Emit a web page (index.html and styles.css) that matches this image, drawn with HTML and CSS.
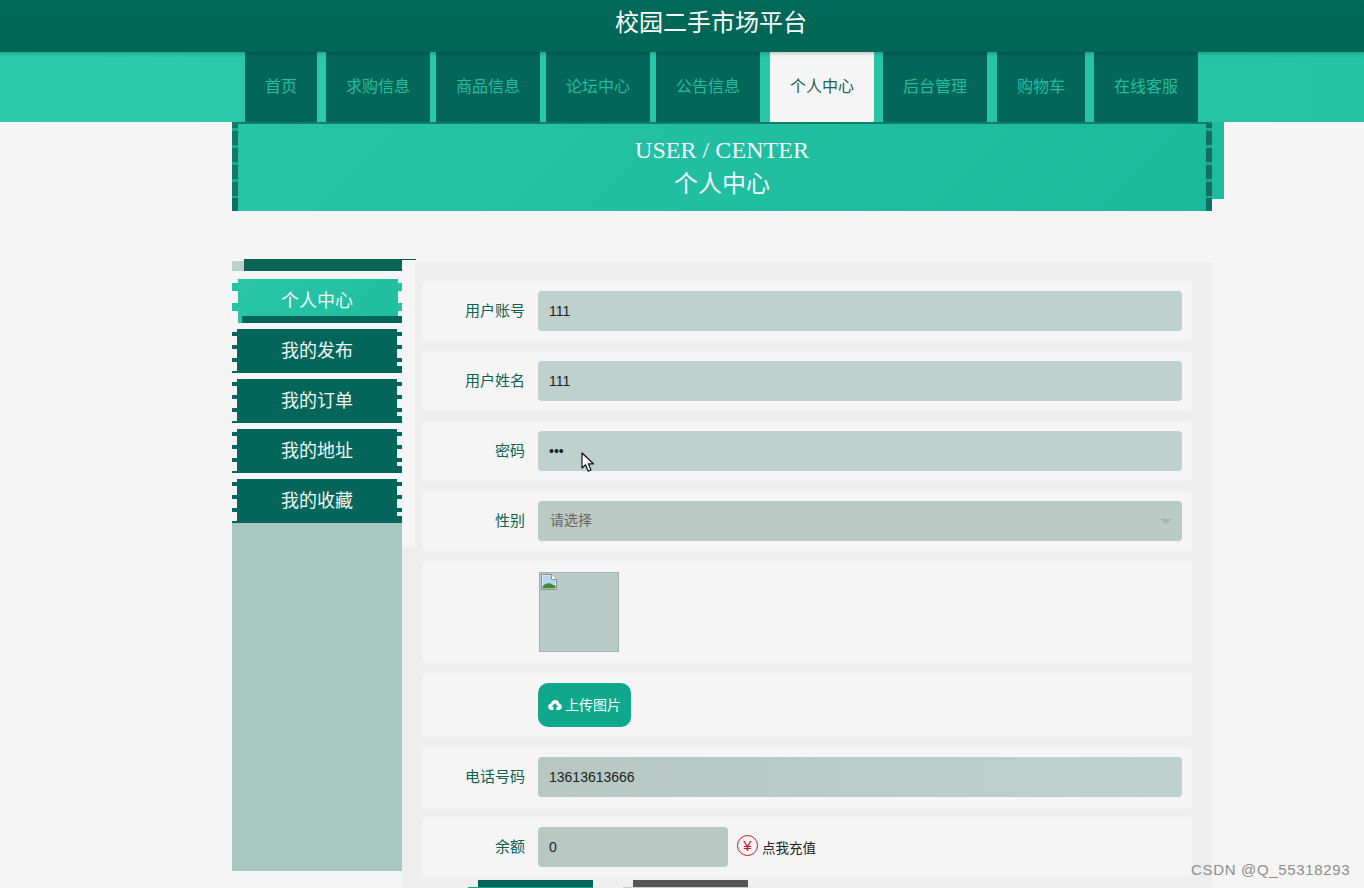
FILE: index.html
```html
<!DOCTYPE html>
<html lang="zh">
<head>
    <meta charset="UTF-8">
    <meta name="viewport" content="width=device-width, initial-scale=1.0">
    <title>校园二手市场平台</title>
    <link rel="stylesheet" href="styles.css">
</head>
<body>
<div class="page">
    <header class="site-header">
        <h1 class="site-title">校园二手市场平台</h1>
    </header>

    <nav class="main-nav">
        <a class="nav-item nav-short" href="#">首页</a>
        <a class="nav-item nav-far" href="#">求购信息</a>
        <a class="nav-item" href="#">商品信息</a>
        <a class="nav-item" href="#">论坛中心</a>
        <a class="nav-item" href="#">公告信息</a>
        <a class="nav-item nav-far nav-active" href="#">个人中心</a>
        <a class="nav-item nav-far" href="#">后台管理</a>
        <a class="nav-item nav-far nav-cart" href="#">购物车</a>
        <a class="nav-item nav-far" href="#">在线客服</a>
    </nav>

    <section class="banner">
        <div class="banner-en">USER / CENTER</div>
        <div class="banner-cn">个人中心</div>
    </section>

    <div class="content">
        <aside class="side">
            <div class="side-top"></div>
            <ul class="side-list">
                <li><a class="side-link side-active" href="#">个人中心</a></li>
                <li><a class="side-link" href="#">我的发布</a></li>
                <li><a class="side-link" href="#">我的订单</a></li>
                <li><a class="side-link" href="#">我的地址</a></li>
                <li><a class="side-link" href="#">我的收藏</a></li>
            </ul>
            <div class="side-fill"></div>
        </aside>

        <main class="panel">
            <form class="user-form">
                <div class="row">
                    <label class="row-label">用户账号</label>
                    <input class="field" type="text" value="111">
                </div>
                <div class="row">
                    <label class="row-label">用户姓名</label>
                    <input class="field" type="text" value="111">
                </div>
                <div class="row">
                    <label class="row-label">密码</label>
                    <div class="field-wrap">
                        <input class="field" type="password" value="111">
                        <svg class="cursor" width="14" height="21" viewBox="0 0 14 21">
                            <path d="M1 1v15l3.600-3.200 2.600 6.400 2.800-1.200-2.700-6.200H12.500z" fill="#fff" stroke="#111" stroke-width="1.200" stroke-linejoin="round"/>
                        </svg>
                    </div>
                </div>
                <div class="row">
                    <label class="row-label">性别</label>
                    <div class="field-wrap select-wrap">
                        <select class="field field-select">
                            <option>请选择</option>
                        </select>
                    </div>
                </div>
                <div class="row row-image">
                    <span class="row-label"></span>
                    <div class="avatar">
                        <svg width="16" height="16" viewBox="0 0 16 16">
                            <path d="M.5.5h10l5 5v10H.5z" fill="#fff" stroke="#8a8f94"/>
                            <path d="M1.500 1.500h8.500v4.500h4.500v4L1.500 13z" fill="#b9d3f2"/>
                            <path d="M1.500 14.500v-2c3-3.500 7-4 9-2.500 1.500 1 3 1.500 4 1v3.500z" fill="#3f8a2e"/>
                            <path d="M10.500.5v5h5" fill="#fff" stroke="#8a8f94"/>
                        </svg>
                    </div>
                </div>
                <div class="row row-upload">
                    <span class="row-label"></span>
                    <button class="upload-btn" type="button">
                        <svg width="14" height="12" viewBox="0 0 14 12">
                            <path d="M3.500 11C1.600 11 .2 9.600.2 7.800c0-1.600 1.100-2.900 2.700-3.200C3.400 2.500 5.100 1 7.200 1c2.200 0 4 1.600 4.300 3.700 1.400.3 2.400 1.600 2.400 3.100 0 1.800-1.400 3.200-3.200 3.200H8.500V7.800h1.900L7 4.300 3.600 7.800h1.900V11z" fill="#fff"/>
                        </svg>
                        <span class="upload-text">上传图片</span>
                    </button>
                </div>
                <div class="row row-phone">
                    <label class="row-label">电话号码</label>
                    <input class="field field-low" type="text" value="13613613666">
                </div>
                <div class="row">
                    <label class="row-label">余额</label>
                    <input class="field field-low field-money" type="text" value="0">
                    <a class="recharge" href="#"><span class="yuan">¥</span>点我充值</a>
                </div>
                <div class="actions">
                    <button class="action-btn" type="button" aria-label="提交"></button>
                    <button class="action-btn action-out" type="button" aria-label="退出登录"></button>
                </div>
            </form>
        </main>
    </div>

    <div class="watermark">CSDN @Q_55318293</div>
</div>
</body>
</html>
```

FILE: styles.css
```css
*,
*:after,
*:before{
    box-sizing: border-box;
}

html, body{
    margin: 0;
    padding: 0;
}

body{
    background-color: #f5f5f5;
    font-family: "Liberation Sans", "Noto Sans CJK SC", sans-serif;
}

a{
    text-decoration: none;
}

.page{
    position: relative;
    width: 1364px;
    height: 888px;
    overflow: hidden;
}

/* top */
.site-header{
    position: relative;
    z-index: 1;
    height: 52px;
    padding-left: 615px;
    background: linear-gradient(180deg, #00695a, #006656);
    box-shadow: 0 2px 3px rgba(0, 0, 0, .18);
}

.site-title{
    margin: 0;
    font-size: 24px;
    font-weight: normal;
    line-height: 46px;
    color: #fff;
}

.main-nav{
    display: flex;
    gap: 6px;
    height: 70px;
    padding-left: 245px;
    background: linear-gradient(90deg, #2cc9ac, #25c2a5);
}

.nav-item{
    width: 104px;
    font-size: 16px;
    line-height: 70px;
    text-align: center;
    color: #25bd9d;
    background-color: #02665a;
}

.nav-short{
    width: 72px;
}

.nav-far{
    margin-left: 3px;
}

.nav-cart{
    width: 88px;
    margin-left: 4px;
}

.nav-active{
    color: #1d5f55;
    background-color: #f5f5f5;
    margin-left: 4px;
}

.banner{
    position: relative;
    width: 980px;
    height: 89px;
    margin-left: 232px;
    padding-top: 10px;
    border-top: 2px solid #137d6b;
    text-align: center;
    color: #f2fbf8;
    font-family: "Liberation Serif", "Noto Sans CJK SC", serif;
    font-size: 24px;
    line-height: 33px;
    background:
        linear-gradient(#0f6f60, #0f6f60) left bottom / 6px 13px no-repeat,
        linear-gradient(#0f6f60, #0f6f60) right bottom / 6px 13px no-repeat,
        repeating-linear-gradient(180deg, #127a67 0 4px, #22a78f 4px 7px, #127a67 7px 17px) left top / 6px 100% no-repeat,
        repeating-linear-gradient(180deg, #0f6f60 0 4px, #22a78f 4px 7px, #0f6f60 7px 17px) right top / 6px 100% no-repeat,
        linear-gradient(135deg, #28c4a8, #1ab99c);
}

.banner-en{
    height: 34px;
    letter-spacing: .05px;
}

.banner:after{
    content: "";
    position: absolute;
    top: -2px;
    left: 980px;
    width: 12px;
    height: 77px;
    background-color: #20bb9f;
}

/* content */
.content{
    display: flex;
    align-items: flex-start;
    width: 980px;
    margin: 48px 0 0 232px;
}

.side{
    display: flex;
    flex-direction: column;
    width: 170px;
    height: 612px;
}

.side-top{
    position: relative;
    height: 12px;
    margin-bottom: 8px;
    background:
        linear-gradient(#0a6454, #0a6454) 12px 0 / 158px 12px no-repeat,
        linear-gradient(#bcd0cb, #bcd0cb) 0 2px / 12px 10px no-repeat;
}

.side-top:after{
    content: "";
    position: absolute;
    top: 0;
    left: 170px;
    width: 14px;
    height: 1px;
    background-color: #0a5c4e;
}

.side-list{
    display: flex;
    flex-direction: column;
    gap: 6px;
    margin: 0;
    padding: 0;
    list-style: none;
}

.side-link{
    display: block;
    height: 44px;
    font-size: 18px;
    line-height: 44px;
    text-align: center;
    color: #f1f8f6;
    background:
        linear-gradient(#04665a, #04665a) 5px 0 / 160px 100% no-repeat,
        linear-gradient(#04665a, #04665a) right bottom / 165px 7px no-repeat,
        repeating-linear-gradient(180deg, transparent 0 3px, #04665a 3px 7px, transparent 7px 13px);
}

.side-active{
    background:
        linear-gradient(#04665a, #04665a) right bottom / 160px 7px no-repeat,
        linear-gradient(135deg, #2ac5a9, #20bd9f) 6px 0 / 160px 100% no-repeat,
        linear-gradient(#26c2a5, #26c2a5) 0 4px / 170px 8px no-repeat,
        linear-gradient(#26c2a5, #26c2a5) 0 24px / 170px 8px no-repeat;
}

.side-fill{
    flex: 1;
    background-color: #a9c7c1;
}

.panel{
    flex: 1;
    height: 640px;
    margin-top: 3px;
    padding: 19px 20px 0;
    background:
        linear-gradient(#f5f5f5, #f5f5f5) 0 0 / 13px 285px no-repeat,
        #eeeeee;
}

.user-form{
    display: flex;
    flex-direction: column;
    gap: 10px;
}

.row{
    display: flex;
    align-items: center;
    height: 60px;
    padding-right: 10px;
    border-radius: 4px;
    background-color: #f5f5f5;
}

.row-image{
    height: 102px;
}

.row-upload{
    height: 64px;
}

.row-phone{
    height: 62px;
    margin-bottom: -2px;
    padding-bottom: 2px;
}

.row-label{
    flex: none;
    width: 103px;
    margin-right: 13px;
    padding-bottom: 3px;
    font-size: 15px;
    text-align: right;
    color: #0f6152;
}

.field-wrap{
    position: relative;
    flex: 1;
    display: flex;
}

.field{
    flex: 1;
    width: 100%;
    height: 40px;
    padding: 0 11px;
    border: 0;
    border-radius: 4px;
    outline: none;
    font-family: inherit;
    font-size: 14px;
    color: #222;
    background-color: #bed1cc;
}

.field-low{
    background: linear-gradient(90deg, #b7c8c3, #bed1cc);
}

.field-money{
    flex: none;
    width: 190px;
    background: #b8c9c4;
}

.field-select{
    appearance: none;
    padding: 0 12px 2px;
    color: #666;
    background-color: #bacbc6;
}

.select-wrap:after{
    content: "";
    position: absolute;
    top: 18px;
    right: 10px;
    border-style: solid;
    border-width: 5px 6px 0;
    border-color: #a4b4b0 transparent transparent;
}

.cursor{
    position: absolute;
    top: 21px;
    left: 43px;
}

.avatar{
    width: 80px;
    height: 80px;
    margin-left: 1px;
    padding: 1px;
    border: 1px solid #a3b1ad;
    background-color: #b9cbc6;
}

.avatar svg{
    display: block;
}

.upload-btn{
    display: flex;
    align-items: center;
    gap: 3px;
    width: 93px;
    height: 44px;
    padding: 0 0 0 10px;
    border: 0;
    border-radius: 10px;
    font-family: inherit;
    font-size: 14px;
    color: #fff;
    background-color: #0fa88c;
}

.upload-text{
    margin-bottom: 2px;
}

.recharge{
    display: flex;
    align-items: center;
    margin-left: 9px;
    font-size: 13.500px;
    color: #222;
}

.yuan{
    display: block;
    width: 21px;
    height: 21px;
    margin: -4px 4px 0 0;
    border: 1px solid #d0112b;
    border-radius: 50%;
    font-size: 15px;
    line-height: 19px;
    text-align: center;
    color: #d0112b;
}

.actions{
    display: flex;
    gap: 30px;
    margin-top: -7px;
    padding-left: 46px;
}

.action-btn{
    width: 125px;
    height: 44px;
    border: 0;
    background:
        linear-gradient(#04665a, #04665a) 10px 0 / 115px 7px no-repeat,
        linear-gradient(#12a98d, #12a98d) 0 7px / 100% 100% no-repeat;
}

.action-out{
    background:
        linear-gradient(#555, #555) 10px 0 / 116px 7px no-repeat,
        linear-gradient(#bed1cc, #bed1cc) 0 7px / 100% 100% no-repeat;
}

.watermark{
    position: absolute;
    top: 861px;
    left: 1191px;
    font-size: 15px;
    line-height: 18px;
    letter-spacing: .67px;
    color: #8d8d8d;
}
```
